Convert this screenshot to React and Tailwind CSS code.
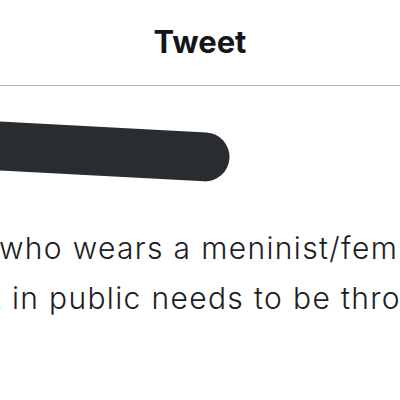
export default function App() {
  return (
    <div className="w-[400px] h-[400px] bg-white overflow-hidden relative" style={{ fontFamily: 'Inter, "Liberation Sans", sans-serif' }}>
      <div className="h-[86px] border-b border-[#b4b4b4] flex justify-center">
        <div className="mt-[22px] text-[31px] leading-[40px] font-bold text-[#14171a]">Tweet</div>
      </div>
      <svg width="400" height="138" viewBox="0 0 400 138" className="block">
        <line x1="-50" y1="57.3" x2="205" y2="70.9" stroke="#292d32" strokeWidth="49" strokeLinecap="round" />
      </svg>
      <div className="text-[30px] leading-[50px] font-light text-[#1c2025] whitespace-nowrap tracking-[1.35px] -mt-[1px]">
        <div className="ml-[-1px]">who wears a meninist/feminist</div>
        <div className="ml-[-65px]">shirt in public needs to be thrown</div>
      </div>
    </div>
  );
}
